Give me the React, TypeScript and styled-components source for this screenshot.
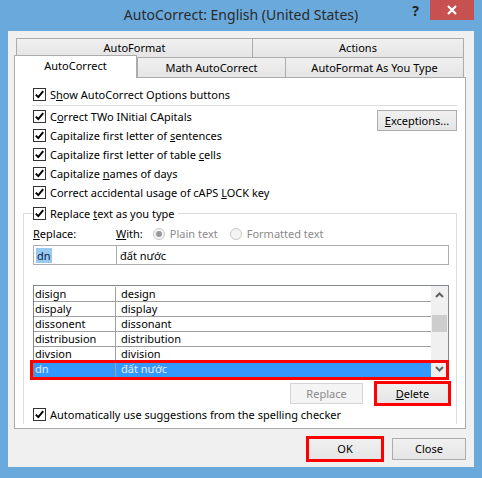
import React from "react";
import styled, { createGlobalStyle, css } from "styled-components";

const Global = createGlobalStyle`
  html, body { margin: 0; padding: 0; }
  body {
    width: 482px; height: 478px; overflow: hidden;
    font-family: "Noto Sans", "Open Sans", sans-serif;
    font-size: 11px; color: #000;
  }
  * { box-sizing: border-box; }
`;

const Window = styled.div`
  width: 482px; height: 478px;
  background: #6aa9dc;
  display: flex; flex-direction: column;
  padding: 0 8px 11px 8px;
`;

const TitleBar = styled.div`
  height: 31px; flex-shrink: 0;
  display: grid; grid-template-columns: 1fr auto 1fr;
`;

const Title = styled.div`
  grid-column: 2;
  font-size: 14px; color: #2b2b2b;
  line-height: 30px;
`;

const Controls = styled.div`
  grid-column: 3;
  display: flex; justify-content: flex-end; align-items: flex-start;
`;

const Help = styled.span`
  font-size: 14px; font-weight: 700; color: #222;
  margin: 3px 11px 0 0; line-height: 16px;
`;

const CloseX = styled.div`
  width: 44px; height: 20px; background: #c75050;
  display: flex; align-items: center; justify-content: center;
`;

const Client = styled.div`
  flex: 1;
  background: #f0f0f0;
  padding: 7px 8px 0 6px;
  display: flex; flex-direction: column;
`;

const TabRow = styled.div`
  display: flex; margin: 0 2px;
  height: ${(p: { $h: number }) => p.$h}px;
  align-items: flex-end;
`;

const Tab = styled.div<{ $w: number; $selected?: boolean; $last?: boolean }>`
  width: ${(p) => p.$w}px;
  height: 100%;
  border: 1px solid #acacac;
  border-bottom: none;
  ${(p) => !p.$last && css`border-right: none;`}
  background: linear-gradient(#f0f0f0, #e5e5e5);
  display: flex; align-items: center; justify-content: center;
  padding-bottom: 1px;
  ${(p) =>
    p.$selected &&
    css`
      position: relative; z-index: 1;
      background: #fff;
      height: calc(100% + 3px);
      margin: 0 0 -1px -2px;
      border-right: 1px solid #acacac;
      padding-bottom: 4px;
    `}
`;

const Panel = styled.div`
  height: 352px;
  border: 1px solid #acacac;
  background: #fff;
  padding: 7px 8px 0 8px;
  overflow: hidden;
  display: flex; flex-direction: column;
`;

const Row = styled.label<{ $h?: number; $indent?: boolean }>`
  display: flex; align-items: center; gap: 4px;
  height: ${(p) => p.$h ?? 19}px;
  ${(p) => p.$indent && css`margin-left: 10px;`}
  white-space: nowrap;
`;

const Separator = styled.div`
  height: 1px; background: #dcdcdc;
  margin: 1px 0 1px 9px;
`;

const RulesBlock = styled.div`
  display: flex; justify-content: space-between; align-items: flex-start;
  margin-left: 10px;
`;

const RuleList = styled.div`
  display: flex; flex-direction: column;
`;

const Button = styled.button<{ $w?: number; $h?: number; $marked?: boolean; $top?: number }>`
  width: ${(p) => p.$w ?? 73}px;
  height: ${(p) => p.$h ?? 21}px;
  margin-top: ${(p) => p.$top ?? 0}px;
  border: 1px solid #acacac;
  background: linear-gradient(#f0f0f0, #e5e5e5);
  font: inherit; color: #000;
  padding: 0 0 1px 0;
  display: flex; align-items: center; justify-content: center;
  ${(p) => p.$marked && css`outline: 3px solid #ff0000; outline-offset: -1px;`}
  &:disabled { background: #f4f4f4; border-color: #d5d5d5; color: #8a8a8a; }
`;

const U = styled.span`
  text-decoration: underline; text-underline-offset: 1px;
`;

const Box = styled.span`
  width: 13px; height: 13px; flex-shrink: 0;
  border: 1px solid #333; background: #fff;
  display: inline-flex; align-items: center; justify-content: center;
`;

const Group = styled.fieldset`
  margin: 2px 0 0 0;
  padding: 0 7px 0 9px;
  border: 1px solid #dcdcdc;
  border-bottom: none;
  min-width: 0;
`;

const Legend = styled.legend`
  padding: 0 3px 0 0;
`;

const ReplaceHead = styled.div`
  display: flex; align-items: center; height: 21px; white-space: nowrap;
`;

const HeadLabel = styled.span<{ $w?: number }>`
  width: ${(p) => (p.$w ? `${p.$w}px` : "auto")};
  flex-shrink: 0;
`;

const RadioOpt = styled.span<{ $ml: number }>`
  display: inline-flex; align-items: center; gap: 5px;
  margin-left: ${(p) => p.$ml}px; color: #8a8a8a;
`;

const RadioCircle = styled.span<{ $on?: boolean }>`
  width: 12px; height: 12px; border-radius: 50%;
  border: 1px solid #c8c8c8; background: #f4f4f4;
  display: inline-flex; align-items: center; justify-content: center;
  &::after {
    content: ""; width: 6px; height: 6px; border-radius: 50%;
    background: ${(p) => (p.$on ? "#9a9a9a" : "transparent")};
  }
`;

const InputRow = styled.div`
  display: flex; height: 20px; margin-top: 1px;
`;

const Field = styled.div<{ $w?: number }>`
  ${(p) => (p.$w ? css`width: ${p.$w}px; flex-shrink: 0;` : css`flex: 1; margin-left: -1px;`)}
  border: 1px solid #abadb3; background: #fff;
  display: flex; align-items: center; padding-left: 2px;
  white-space: nowrap;
`;

const Sel = styled.span`
  background: #99c9ef; color: #0b1f4d; padding: 0 1px; line-height: 15px;
`;

const ListWrap = styled.div`
  position: relative; margin-top: 20px;
`;

const List = styled.div`
  border: 1px solid #828790; background: #fff;
  display: flex; height: 93px;
`;

const Rows = styled.div`
  flex: 1; padding-top: 1px; display: flex; flex-direction: column;
`;

const Entry = styled.div<{ $sel?: boolean }>`
  display: grid; grid-template-columns: 82px 1fr;
  height: 15px; line-height: 14px;
  border-bottom: 1px solid #a0a0a0;
  ${(p) => p.$sel && css`background: #3399ff; color: #e8eef6; border-bottom: none;`}
`;

const Cell = styled.span<{ $first?: boolean }>`
  padding-left: ${(p) => (p.$first ? 1 : 5)}px;
  ${(p) => p.$first && css`border-right: 1px solid #a0a0a0;`}
  white-space: nowrap; overflow: hidden;
`;

const ScrollBar = styled.div`
  width: 17px; background: #f0f0f0;
  display: flex; flex-direction: column;
`;

const Arrow = styled.div`
  height: 17px; display: flex; align-items: center; justify-content: center;
`;

const Thumb = styled.div`
  height: 17px; margin: 12px 1px 0 1px; background: #cdcdcd;
`;

const Spacer = styled.div` flex: 1; `;

const Highlight = styled.div`
  position: absolute; left: -3px; right: 0; bottom: -2px; height: 20px;
  border: 3px solid #ff0000; pointer-events: none;
`;

const ActionRow = styled.div`
  display: flex; justify-content: flex-end; gap: 13px; margin-top: 5px;
`;

const Footer = styled.div`
  display: flex; justify-content: flex-end; gap: 10px; margin-top: 9px;
`;

const Check = () => (
  <Box>
    <svg width="11" height="11" viewBox="0 0 11 11">
      <path d="M1.8 5.6 L4.3 8.1 L9.2 2.2" fill="none" stroke="#000" strokeWidth="2" />
    </svg>
  </Box>
);

const Chevron = ({ up }: { up?: boolean }) => (
  <svg width="9" height="6" viewBox="0 0 9 6">
    <path d={up ? "M1 5 L4.5 1.5 L8 5" : "M1 1 L4.5 4.5 L8 1"} fill="none" stroke="#606060" strokeWidth="2" />
  </svg>
);

const entries: [string, string][] = [
  ["disign", "design"],
  ["dispaly", "display"],
  ["dissonent", "dissonant"],
  ["distribusion", "distribution"],
  ["divsion", "division"],
];

export default function App() {
  return (
    <>
      <Global />
      <Window>
        <TitleBar>
          <Title>AutoCorrect: English (United States)</Title>
          <Controls>
            <Help>?</Help>
            <CloseX>
              <svg width="10" height="10" viewBox="0 0 10 10">
                <path d="M1 1 L9 9 M9 1 L1 9" stroke="#fff" strokeWidth="2.2" />
              </svg>
            </CloseX>
          </Controls>
        </TitleBar>
        <Client>
          <TabRow $h={19}>
            <Tab $w={236}>AutoFormat</Tab>
            <Tab $w={212} $last>Actions</Tab>
          </TabRow>
          <TabRow $h={20}>
            <Tab $w={123} $selected>AutoCorrect</Tab>
            <Tab $w={148}>Math AutoCorrect</Tab>
            <Tab $w={179} $last>AutoFormat As You Type</Tab>
          </TabRow>
          <Panel>
            <Row $indent>
              <Check />
              <span>S<U>h</U>ow AutoCorrect Options buttons</span>
            </Row>
            <Separator />
            <RulesBlock>
              <RuleList>
                <Row><Check /><span>C<U>o</U>rrect TWo INitial CApitals</span></Row>
                <Row><Check /><span>Capitalize first letter of <U>s</U>entences</span></Row>
                <Row><Check /><span>Capitalize first letter of table <U>c</U>ells</span></Row>
                <Row><Check /><span>Capitalize <U>n</U>ames of days</span></Row>
                <Row><Check /><span>Correct accidental usage of cAPS <U>L</U>OCK key</span></Row>
              </RuleList>
              <Button $w={80} $h={21} $top={3}><span><U>E</U>xceptions...</span></Button>
            </RulesBlock>
            <Group>
              <Legend>
                <Row><Check /><span>Replace <U>t</U>ext as you type</span></Row>
              </Legend>
              <ReplaceHead>
                <HeadLabel $w={83}><U>R</U>eplace:</HeadLabel>
                <HeadLabel><U>W</U>ith:</HeadLabel>
                <RadioOpt $ml={10}><RadioCircle $on />Plain text</RadioOpt>
                <RadioOpt $ml={12}><RadioCircle />Formatted text</RadioOpt>
              </ReplaceHead>
              <InputRow>
                <Field $w={84}><Sel>dn</Sel></Field>
                <Field style={{ paddingLeft: 3 }}>đất nước</Field>
              </InputRow>
              <ListWrap>
                <List>
                  <Rows>
                    {entries.map(([a, b]) => (
                      <Entry key={a}>
                        <Cell $first>{a}</Cell>
                        <Cell>{b}</Cell>
                      </Entry>
                    ))}
                    <Entry $sel>
                      <Cell $first>dn</Cell>
                      <Cell>đất nước</Cell>
                    </Entry>
                  </Rows>
                  <ScrollBar>
                    <Arrow><Chevron up /></Arrow>
                    <Thumb />
                    <Spacer />
                    <Arrow><Chevron /></Arrow>
                  </ScrollBar>
                </List>
                <Highlight />
              </ListWrap>
              <ActionRow>
                <Button disabled>Replace</Button>
                <Button $marked><span><U>D</U>elete</span></Button>
              </ActionRow>
              <Row style={{ marginTop: 1 }}>
                <Check />
                <span>Automatically use su<U>g</U>gestions from the spelling checker</span>
              </Row>
            </Group>
          </Panel>
          <Footer>
            <Button $w={74} $h={22} $marked>OK</Button>
            <Button $w={74} $h={22}>Close</Button>
          </Footer>
        </Client>
      </Window>
    </>
  );
}
